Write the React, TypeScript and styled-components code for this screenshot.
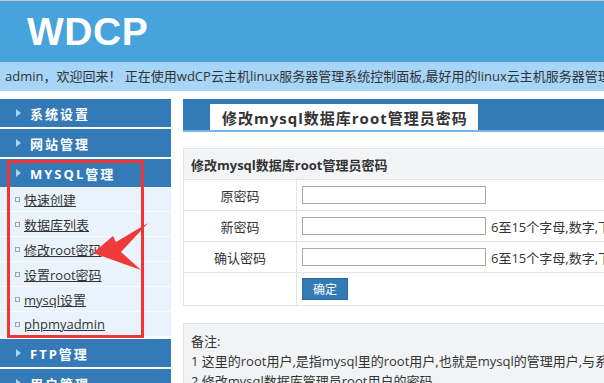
import React from 'react';
import styled, { createGlobalStyle } from 'styled-components';

const GlobalStyle = createGlobalStyle`
  html, body {
    margin: 0;
    padding: 0;
    overflow: hidden;
    background: #fff;
  }
  body {
    font-family: "Open Sans", "Noto Sans CJK SC", sans-serif;
    font-size: 13px;
    color: #333;
  }
`;

const Page = styled.div`
  width: 820px;
  position: relative;
  border-top: 1px solid #c9c9c9;
`;

const Header = styled.header`
  height: 61px;
  background: #47a3dc;
  display: flex;
  align-items: center;
  padding-left: 27px;
`;

const Logo = styled.div`
  font-family: "Liberation Sans", Arial, sans-serif;
  font-weight: bold;
  font-size: 39px;
  color: #fff;
  letter-spacing: 0.5px;
`;

const WelcomeBar = styled.div`
  height: 29px;
  line-height: 29px;
  background: #a6d5f7;
  padding-left: 5px;
  white-space: nowrap;
  overflow: hidden;
`;

const Body = styled.div`
  display: flex;
  padding-top: 8px;
  gap: 12px;
`;

const Sidebar = styled.nav`
  width: 171px;
  flex: none;
  position: relative;
  display: flex;
  flex-direction: column;
`;

const NavHeading = styled.div`
  height: 28px;
  background: #337ab7;
  margin-bottom: 2px;
  display: flex;
  align-items: center;
  padding-left: 16px;
  color: #fff;
  font-weight: bold;
  letter-spacing: 2px;
  font-size: 13px;
  &:before {
    content: '';
    width: 0;
    height: 0;
    border-top: 4px solid transparent;
    border-bottom: 4px solid transparent;
    border-left: 5px solid #a9d3f4;
    margin-right: 9px;
  }
`;

const SubList = styled.div`
  display: flex;
  flex-direction: column;
  margin-top: -2px;
  margin-bottom: 2px;
`;

const SubItem = styled.a`
  height: 24px;
  border-bottom: 1px solid #fafdff;
  background: #eaf3fc;
  display: flex;
  align-items: center;
  padding-left: 15px;
  color: #333;
  text-decoration: underline;
  white-space: nowrap;
  &:before {
    content: '';
    width: 3px;
    height: 3px;
    border: 1px solid #8ea8c4;
    margin-right: 4px;
  }
`;

const Highlight = styled.div`
  position: absolute;
  left: 7px;
  top: 61px;
  width: 131px;
  height: 172px;
  border: 3px solid #ee3636;
  pointer-events: none;
`;

const Arrow = styled.svg`
  position: absolute;
  left: 0;
  top: 0;
  pointer-events: none;
`;

const Main = styled.main`
  flex: 1;
  display: flex;
  flex-direction: column;
`;

const TabBar = styled.div`
  height: 31px;
  background: #337ab7;
  border-bottom: 2px solid #72b6ea;
  display: flex;
  align-items: flex-end;
  padding-left: 27px;
`;

const Tab = styled.div`
  height: 26px;
  background: #fff;
  padding: 0 10px 0 12px;
  display: flex;
  align-items: center;
  font-weight: bold;
  font-size: 15px;
  letter-spacing: 1px;
  color: #333;
`;

const FormTable = styled.div`
  margin-top: 16px;
  border: 1px solid #e1e4e9;
  display: flex;
  flex-direction: column;
`;

const TableHead = styled.div`
  height: 30px;
  background: #f3f4f6;
  display: flex;
  align-items: center;
  padding-left: 7px;
  font-weight: bold;
`;

const Row = styled.div<{ $tall?: boolean }>`
  height: ${p => (p.$tall ? 32 : 30)}px;
  border-top: 1px solid #e1e4e9;
  display: flex;
`;

const Label = styled.div`
  width: 112px;
  border-right: 1px solid #e1e4e9;
  display: flex;
  align-items: center;
  justify-content: center;
`;

const Field = styled.div`
  display: flex;
  align-items: center;
  padding-left: 5px;
  gap: 5px;
  white-space: nowrap;
`;

const Input = styled.input`
  width: 180px;
  height: 16px;
  border: 1px solid #a9a9a9;
  padding: 0 1px;
  margin: 0;
`;

const Button = styled.button`
  width: 46px;
  height: 22px;
  background: #337ab7;
  border: 1px solid #2b6aa2;
  color: #fff;
  font-family: inherit;
  font-size: 12px;
  padding: 0;
`;

const Notes = styled.div`
  margin-top: 17px;
  background: #f2f3f5;
  border: 1px solid #dfe2e6;
  padding: 7px 7px;
  line-height: 20px;
  white-space: nowrap;
`;

const subItems = ['快速创建', '数据库列表', '修改root密码', '设置root密码', 'mysql设置', 'phpmyadmin'];

const App: React.FC = () => (
  <Page>
    <GlobalStyle />
    <Header>
      <Logo>WDCP</Logo>
    </Header>
    <WelcomeBar>
      admin，欢迎回来！ 正在使用wdCP云主机linux服务器管理系统控制面板,最好用的linux云主机服务器管理系统！这里是
    </WelcomeBar>
    <Body>
      <Sidebar>
        <NavHeading>系统设置</NavHeading>
        <NavHeading>网站管理</NavHeading>
        <NavHeading>MYSQL管理</NavHeading>
        <SubList>
          {subItems.map(item => (
            <SubItem key={item}>{item}</SubItem>
          ))}
        </SubList>
        <NavHeading>FTP管理</NavHeading>
        <NavHeading>用户管理</NavHeading>
        <Highlight />
      </Sidebar>
      <Main>
        <TabBar>
          <Tab>修改mysql数据库root管理员密码</Tab>
        </TabBar>
        <FormTable>
          <TableHead>修改mysql数据库root管理员密码</TableHead>
          <Row>
            <Label>原密码</Label>
            <Field><Input type="password" /></Field>
          </Row>
          <Row>
            <Label>新密码</Label>
            <Field><Input type="password" />6至15个字母,数字,下划线组成</Field>
          </Row>
          <Row>
            <Label>确认密码</Label>
            <Field><Input type="password" />6至15个字母,数字,下划线组成</Field>
          </Row>
          <Row $tall>
            <Label />
            <Field><Button>确定</Button></Field>
          </Row>
        </FormTable>
        <Notes>
          <div>备注:</div>
          <div>1 这里的root用户,是指mysql里的root用户,也就是mysql的管理用户,与系统的root用户无关</div>
          <div>2 修改mysql数据库管理员root用户的密码</div>
        </Notes>
      </Main>
    </Body>
    <Arrow width="604" height="383" viewBox="0 0 604 383">
      <polygon
        points="93,252 113,235 116,241 148,222 121,251 141,269"
        fill="#f03a3a"
      />
    </Arrow>
  </Page>
);

export default App;
